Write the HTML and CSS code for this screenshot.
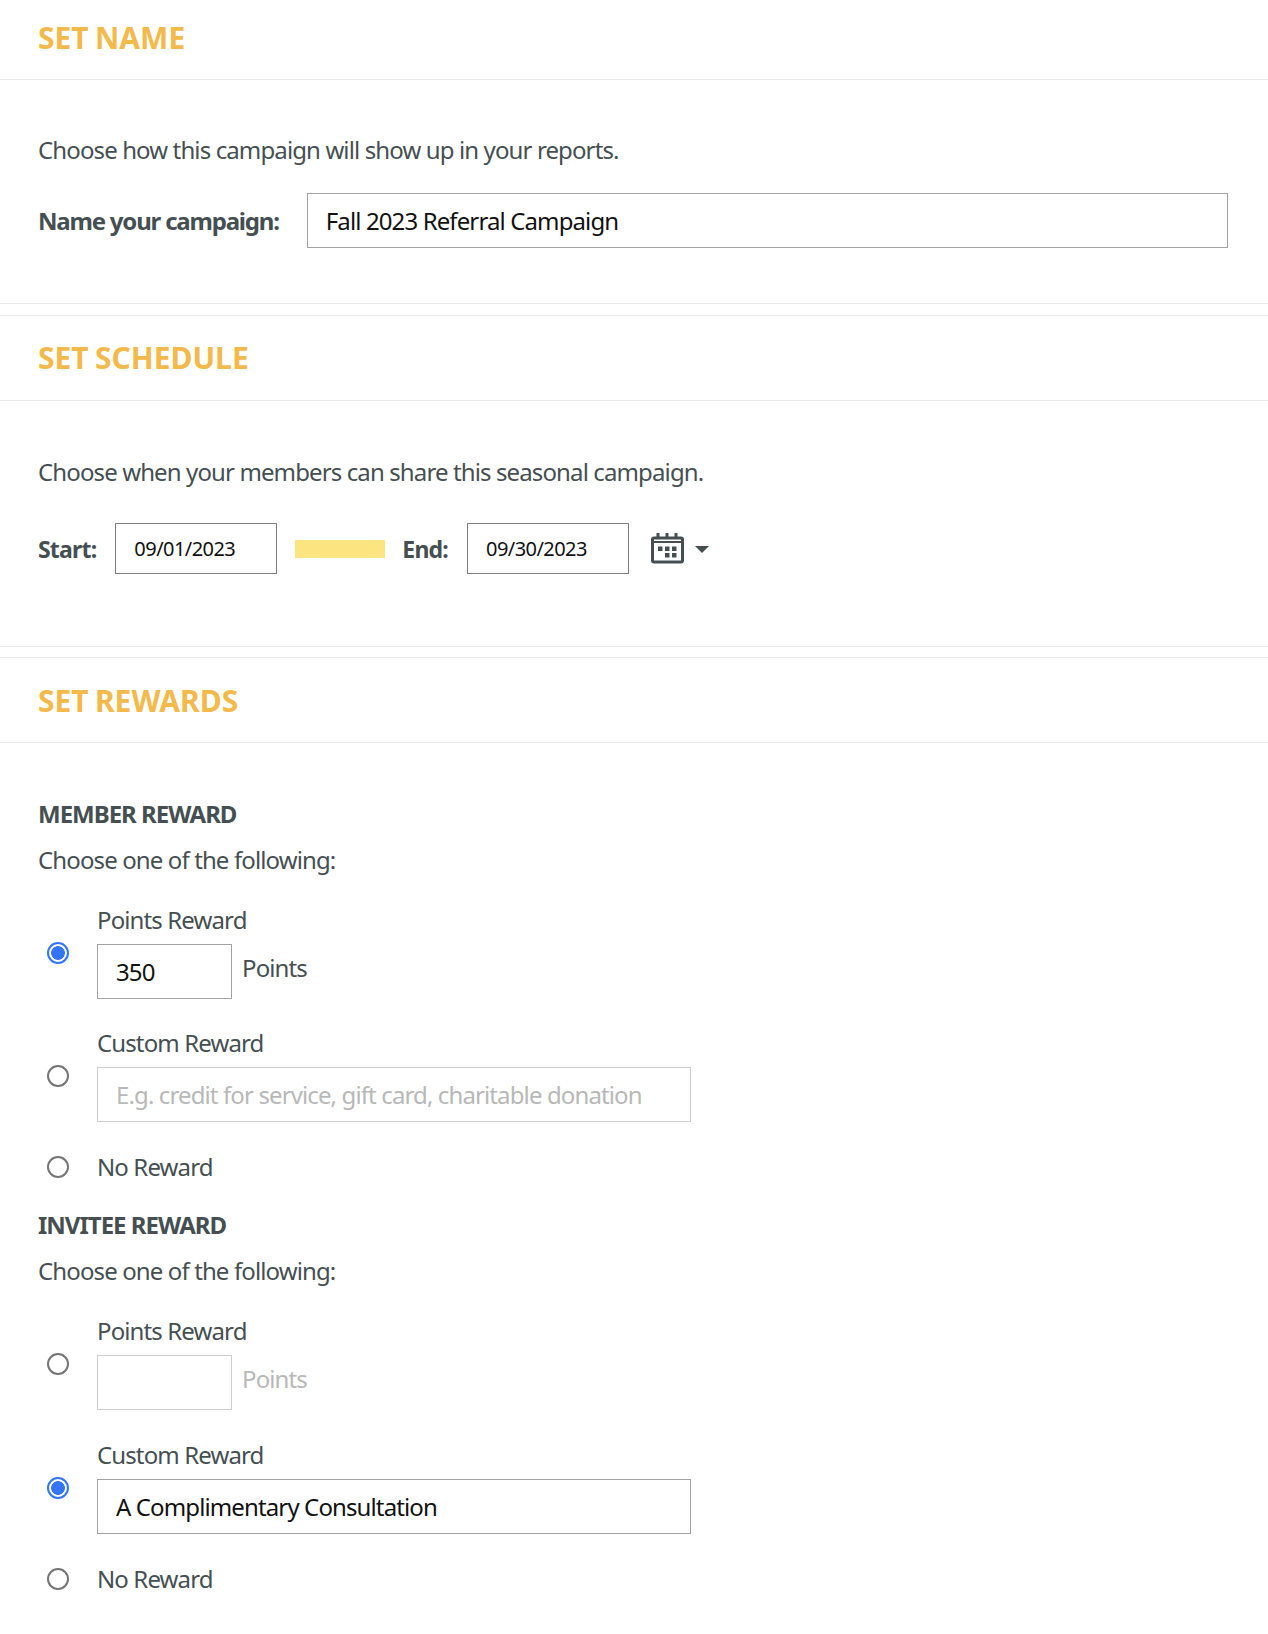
FILE: index.html
```html
<!DOCTYPE html>
<html lang="en">
<head>
<meta charset="utf-8">
<title>Campaign setup</title>
<link rel="stylesheet" href="styles.css">
</head>
<body>
<form class="page">
  <section class="panel panel-name">
    <h2 class="panel-title">SET NAME</h2>
    <div class="panel-body">
      <p class="intro">Choose how this campaign will show up in your reports.</p>
      <div class="name-row">
        <label class="strong" for="cname">Name your campaign:</label>
        <input class="field field-wide" id="cname" type="text" value="Fall 2023 Referral Campaign">
      </div>
    </div>
  </section>

  <section class="panel panel-schedule">
    <h2 class="panel-title">SET SCHEDULE</h2>
    <div class="panel-body">
      <p class="intro">Choose when your members can share this seasonal campaign.</p>
      <div class="date-row">
        <label class="strong small" for="dstart">Start:</label>
        <input class="field field-date" id="dstart" type="text" value="09/01/2023">
        <span class="swatch"></span>
        <label class="strong small" for="dend">End:</label>
        <input class="field field-date" id="dend" type="text" value="09/30/2023">
        <svg class="cal" viewBox="0 0 33 31" width="33" height="31" aria-hidden="true">
          <path fill="#454f52" fill-rule="evenodd" d="M5.500 0h3v3.500h6V0h3v3.500h6V0h3v3.500H30a3 3 0 0 1 3 3V27.500a3 3 0 0 1-3 3H3a3 3 0 0 1-3-3V6.500a3 3 0 0 1 3-3h2.500zM3 10v17.500h27V10zM3 6.500V8h27V6.500z"/>
          <path fill="#454f52" d="M7 13.500h4.500V18H7zM14 13.500h4.500V18H14zM21 13.500h4.500V18H21zM14 20h4.500v4.500H14zM21 20h4.500v4.500H21z"/>
        </svg>
        <span class="caret"></span>
      </div>
    </div>
  </section>

  <section class="panel panel-rewards">
    <h2 class="panel-title">SET REWARDS</h2>
    <div class="panel-body">
      <div class="reward-group">
        <h3 class="group-title">MEMBER REWARD</h3>
        <p class="choose">Choose one of the following:</p>
        <div class="option">
          <input class="radio" type="radio" name="member" checked>
          <div class="option-main">
            <div class="option-label">Points Reward</div>
            <div class="points-row">
              <input class="field field-points" type="text" value="350">
              <span class="points-unit">Points</span>
            </div>
          </div>
        </div>
        <div class="option">
          <input class="radio" type="radio" name="member">
          <div class="option-main">
            <div class="option-label">Custom Reward</div>
            <input class="field field-custom is-off" type="text" placeholder="E.g. credit for service, gift card, charitable donation">
          </div>
        </div>
        <div class="option option-plain">
          <input class="radio" type="radio" name="member">
          <div class="option-label">No Reward</div>
        </div>
      </div>

      <div class="reward-group">
        <h3 class="group-title">INVITEE REWARD</h3>
        <p class="choose">Choose one of the following:</p>
        <div class="option">
          <input class="radio" type="radio" name="invitee">
          <div class="option-main">
            <div class="option-label">Points Reward</div>
            <div class="points-row">
              <input class="field field-points is-off" type="text">
              <span class="points-unit is-muted">Points</span>
            </div>
          </div>
        </div>
        <div class="option">
          <input class="radio" type="radio" name="invitee" checked>
          <div class="option-main">
            <div class="option-label">Custom Reward</div>
            <input class="field field-custom" type="text" value="A Complimentary Consultation">
          </div>
        </div>
        <div class="option option-plain">
          <input class="radio" type="radio" name="invitee">
          <div class="option-label">No Reward</div>
        </div>
      </div>
    </div>
  </section>
</form>
</body>
</html>
```
FILE: styles.css
```css
* { box-sizing: border-box; }
html, body { margin: 0; padding: 0; background: #fff; }
body {
  font-family: "Noto Sans", "Open Sans", sans-serif;
  font-size: 24px;
  letter-spacing: -0.88px;
  color: #454f52;
  height: 1634px;
  overflow: hidden;
}
p, h2, h3 { margin: 0; }
.panel-title {
  height: 85px;
  padding: 22px 38px 0;
  border-bottom: 1px solid #eaeaea;
  color: #f3b94a;
  font-size: 30px;
  line-height: 40px;
  font-weight: 700;
  letter-spacing: 0;
  word-spacing: -1.5px;
}
.panel-body { padding: 53px 38px 0; }
.panel-name { height: 316px; border-bottom: 1px solid #eaeaea; }
.panel-name .panel-title { height: 80px; padding-top: 18px; }
.panel-name .panel-body { height: 224px; padding-top: 52px; border-bottom: 1px solid #eaeaea; }
.panel-schedule { height: 341px; }
.panel-schedule .panel-body { height: 246px; border-bottom: 1px solid #eaeaea; }
.panel-rewards { border-top: 1px solid #eaeaea; }
.panel-rewards .panel-title { padding-top: 23px; }
.intro { line-height: 36px; }
.name-row { display: flex; align-items: center; gap: 28px; margin-top: 25px; }
.strong { font-weight: 700; letter-spacing: -1.2px; white-space: nowrap; }
.strong.small { font-size: 23px; letter-spacing: -0.8px; }
.field {
  display: block;
  height: 55px;
  padding: 0 18px;
  border: 1px solid #a3a3a3;
  border-radius: 0;
  background: #fff;
  color: #111;
  font: inherit;
  letter-spacing: inherit;
  outline: 0;
}
.field-wide { width: 921px; }
.date-row { display: flex; align-items: center; height: 51px; margin-top: 33px; }
.field-date {
  width: 162px;
  height: 51px;
  margin-left: 19px;
  border-color: #808080;
  font-size: 20px;
  letter-spacing: -0.55px;
}
.swatch { width: 90px; height: 18px; margin: 0 17px 0 18px; background: #fce481; }
.cal { margin-left: 22px; }
.caret {
  margin: 2px 0 0 11px;
  border-left: 7px solid transparent;
  border-right: 7px solid transparent;
  border-top: 7px solid #454f52;
}
.reward-group + .reward-group { margin-top: 22px; }
.group-title { font-size: 24px; line-height: 36px; font-weight: 700; letter-spacing: -1px; }
.choose { margin-top: 10px; line-height: 36px; }
.option { display: flex; align-items: center; margin-top: 24px; }
.option + .option { margin-top: 26px; }
.option + .option-plain { margin-top: 27px; }
.reward-group + .reward-group .option + .option { margin-top: 27px; }
.radio {
  appearance: none;
  flex: none;
  width: 22px;
  height: 22px;
  margin: 5px 28px 0 9px;
  border: 2px solid #757575;
  border-radius: 50%;
  background: #fff;
}
.radio:checked {
  border-color: #3375f6;
  background: radial-gradient(circle, #3375f6 0 6.500px, #fff 7.200px);
}
.option-plain .radio { margin-top: 0; }
.option-label { line-height: 36px; }
.option-main { flex: 1; }
.points-row { display: flex; align-items: flex-start; gap: 10px; margin-top: 6px; }
.field-points { width: 135px; }
.points-unit { line-height: 48px; }
.field-custom { width: 594px; margin-top: 6px; }
.field.is-off { border-color: #cfcfcf; }
.field.is-off::placeholder { color: #b8b8b8; opacity: 1; }
.is-muted { color: #b8b8b8; }
```
